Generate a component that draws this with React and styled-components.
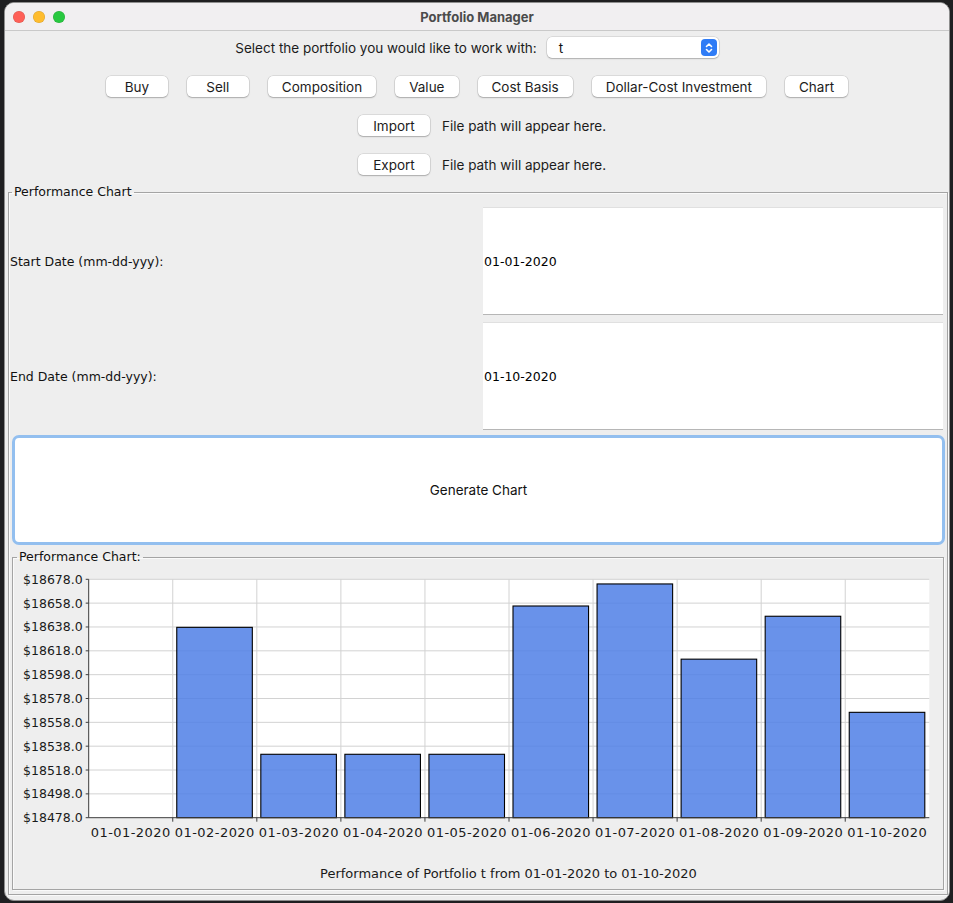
import React from "react";
import styled, { createGlobalStyle } from "styled-components";

const GlobalStyle = createGlobalStyle`
  html, body {
    margin: 0;
    padding: 0;
  }
  body {
    background: #1f1f21;
    padding: 2px 3px 0 4px;
    width: 953px;
    height: 903px;
    box-sizing: border-box;
    overflow: hidden;
  }
`;

const UI_FONT = `"Inter", "Roboto", "Noto Sans", sans-serif`;
const CHART_FONT = `"DejaVu Sans", "Noto Sans", sans-serif`;

const Window = styled.div`
  width: 946px;
  height: 899px;
  box-sizing: border-box;
  background: #eeeeee;
  border: 1px solid #8e8e8e;
  border-radius: 10px;
  overflow: hidden;
  display: flex;
  flex-direction: column;
`;

const TitleBar = styled.div`
  height: 27px;
  flex: none;
  background: #f1eff1;
  border-bottom: 1px solid #c9c9c9;
  display: grid;
  grid-template-columns: 1fr auto 1fr;
  align-items: center;
`;

const Lights = styled.div`
  display: flex;
  gap: 8px;
  padding-left: 8px;
`;

const Light = styled.span`
  width: 12px;
  height: 12px;
  border-radius: 50%;
  background: ${(p) => p.color};
  box-shadow: inset 0 0 0 0.5px rgba(0, 0, 0, 0.15);
`;

const Title = styled.div`
  font-family: ${UI_FONT};
  font-weight: 700;
  font-size: 13px;
  color: #4b4b4b;
`;

const Content = styled.div`
  flex: 1;
  display: flex;
  flex-direction: column;
  padding-top: 6px;
  min-height: 0;
`;

const Toolbar = styled.div`
  display: flex;
  flex-direction: column;
  gap: 18px;
`;

const Row = styled.div`
  height: 21px;
  display: flex;
  align-items: center;
  justify-content: center;
  gap: ${(p) => p.gap}px;
  padding-left: ${(p) => p.shift || 0}px;
`;

const Label = styled.span`
  font-family: ${UI_FONT};
  font-size: 13.5px;
  color: #1c1c1c;
`;

const Combo = styled.div`
  width: 172px;
  height: 21px;
  box-sizing: border-box;
  background: #fff;
  border-radius: 5px;
  box-shadow: 0 0 0 0.5px rgba(0, 0, 0, 0.16), 0 1px 1.5px rgba(0, 0, 0, 0.2);
  display: flex;
  align-items: center;
  justify-content: space-between;
  padding: 0 2px 0 12px;
  font-family: ${UI_FONT};
  font-size: 13.5px;
  color: #111;
`;

const Stepper = styled.span`
  width: 16px;
  height: 17px;
  border-radius: 4px;
  background: #2f7cf6;
  display: flex;
  align-items: center;
  justify-content: center;
`;

const PushButton = styled.button`
  height: 21px;
  min-width: ${(p) => p.minWidth || 62}px;
  padding: 0 14px;
  background: #fff;
  border: none;
  border-radius: 5px;
  box-shadow: 0 0 0 0.5px rgba(0, 0, 0, 0.16), 0 1px 1.5px rgba(0, 0, 0, 0.22);
  font-family: ${UI_FONT};
  font-size: 13.5px;
  color: #1c1c1c;
  cursor: pointer;
`;

const GroupBox = styled.fieldset`
  flex: 1;
  min-width: 0;
  min-height: 0;
  display: flex;
  flex-direction: column;
  margin: ${(p) => p.margin};
  padding: ${(p) => p.pad};
  border: 1px solid #a4a4a4;
  box-shadow: inset 1px 1px 0 #fafafa, 1px 1px 0 #fafafa;
`;

const GroupTitle = styled.legend`
  font-family: ${CHART_FONT};
  font-size: 12.5px;
  line-height: 16px;
  color: #111;
  padding: 0 2px;
  margin-left: ${(p) => p.indent}px;
`;

const DateRow = styled.div`
  height: 108px;
  flex: none;
  display: grid;
  grid-template-columns: 1fr 460px;
  margin-bottom: 7px;
`;

const DateLabel = styled.span`
  align-self: center;
  font-family: ${CHART_FONT};
  font-size: 12.5px;
  color: #111;
`;

const DateField = styled.div`
  box-sizing: border-box;
  background: #fff;
  border-top: 1px solid #e0e0e0;
  border-bottom: 1px solid #b6b6b6;
  display: flex;
  align-items: center;
  padding-left: 1px;
  font-family: ${CHART_FONT};
  font-size: 12.5px;
  color: #000;
`;

const GenerateButton = styled.button`
  height: 110px;
  flex: none;
  margin: -2px -2px 0 2px;
  background: #fff;
  border: 3px solid #93bfef;
  border-radius: 7px;
  font-family: ${UI_FONT};
  font-size: 13.5px;
  color: #111;
  cursor: pointer;
`;

const ChartSvg = styled.svg`
  display: block;
  flex: none;
`;

const data = [
  { date: "01-01-2020", value: 18478 },
  { date: "01-02-2020", value: 18637.7 },
  { date: "01-03-2020", value: 18531.2 },
  { date: "01-04-2020", value: 18531.2 },
  { date: "01-05-2020", value: 18531.2 },
  { date: "01-06-2020", value: 18655.6 },
  { date: "01-07-2020", value: 18674.1 },
  { date: "01-08-2020", value: 18611 },
  { date: "01-09-2020", value: 18647 },
  { date: "01-10-2020", value: 18566.4 },
];

const PLOT = { left: 75.7, right: 916.3, top: 14.3, bottom: 252.7 };
const MIN = 18478;
const MAX = 18678;

const yOf = (v) => PLOT.bottom - ((v - MIN) / (MAX - MIN)) * (PLOT.bottom - PLOT.top);

const PerformanceChart = () => {
  const cw = (PLOT.right - PLOT.left) / data.length;
  const ticks = Array.from({ length: 11 }, (_, i) => MIN + i * 20);

  return (
    <ChartSvg width="929" height="322" viewBox="0 0 929 322">
      <rect x={PLOT.left} y={PLOT.top} width={PLOT.right - PLOT.left} height={PLOT.bottom - PLOT.top} fill="#fff" />
      {ticks.slice(1).map((t) => (
        <line key={t} x1={PLOT.left} x2={PLOT.right} y1={yOf(t)} y2={yOf(t)} stroke="#d2d2d2" strokeWidth="1" />
      ))}
      {data.slice(1).map((_, i) => (
        <line
          key={i}
          x1={PLOT.left + cw * (i + 1)}
          x2={PLOT.left + cw * (i + 1)}
          y1={PLOT.top}
          y2={PLOT.bottom}
          stroke="#d2d2d2"
          strokeWidth="1"
        />
      ))}
      {data.map((d, i) =>
        d.value > MIN ? (
          <rect
            key={d.date}
            x={PLOT.left + cw * i + 4}
            y={yOf(d.value)}
            width={cw - 8.5}
            height={PLOT.bottom - yOf(d.value)}
            fill="#4f7fe6"
            fillOpacity="0.85"
            stroke="#000"
            strokeWidth="1.1"
          />
        ) : null
      )}
      <line x1={PLOT.left} x2={PLOT.left} y1={PLOT.top} y2={PLOT.bottom} stroke="#3c3c3c" strokeWidth="1" />
      <line x1={PLOT.left} x2={PLOT.right} y1={PLOT.bottom} y2={PLOT.bottom} stroke="#3c3c3c" strokeWidth="1" />
      {ticks.map((t) => (
        <g key={t}>
          <line x1={PLOT.left - 3} x2={PLOT.left} y1={yOf(t)} y2={yOf(t)} stroke="#3c3c3c" strokeWidth="1" />
          <text
            x={PLOT.left - 6}
            y={yOf(t) + 4.5}
            textAnchor="end"
            fontFamily={CHART_FONT}
            fontSize="12.5"
            fill="#1a1a1a"
          >
            ${t.toFixed(1)}
          </text>
        </g>
      ))}
      {data.map((d, i) => (
        <g key={d.date}>
          {i > 0 && (
            <line
              x1={PLOT.left + cw * i}
              x2={PLOT.left + cw * i}
              y1={PLOT.bottom}
              y2={PLOT.bottom + 4}
              stroke="#3c3c3c"
              strokeWidth="1"
            />
          )}
          <text
            x={PLOT.left + cw * (i + 0.5)}
            y="271.5"
            textAnchor="middle"
            fontFamily={CHART_FONT}
            fontSize="13"
            letterSpacing="0.45"
            fill="#1a1a1a"
          >
            {d.date}
          </text>
        </g>
      ))}
      <text x="495.5" y="312.5" textAnchor="middle" fontFamily={CHART_FONT} fontSize="13" fill="#1a1a1a">
        Performance of Portfolio t from 01-01-2020 to 01-10-2020
      </text>
    </ChartSvg>
  );
};

const actions = ["Buy", "Sell", "Composition", "Value", "Cost Basis", "Dollar-Cost Investment", "Chart"];

const App = () => (
  <>
    <GlobalStyle />
    <Window>
      <TitleBar>
        <Lights>
          <Light color="#fe5f57" />
          <Light color="#febc2e" />
          <Light color="#28c840" />
        </Lights>
        <Title>Portfolio Manager</Title>
        <span />
      </TitleBar>
      <Content>
        <Toolbar>
          <Row gap={10}>
            <Label>Select the portfolio you would like to work with:</Label>
            <Combo>
              t
              <Stepper>
                <svg width="8" height="12" viewBox="0 0 8 12" fill="none" stroke="#fff" strokeWidth="1.6" strokeLinecap="round" strokeLinejoin="round">
                  <path d="M1.5 4.5 L4 2 L6.5 4.5" />
                  <path d="M1.5 7.5 L4 10 L6.5 7.5" />
                </svg>
              </Stepper>
            </Combo>
          </Row>
          <Row gap={19}>
            {actions.map((a) => (
              <PushButton key={a}>{a}</PushButton>
            ))}
          </Row>
          <Row gap={12} shift={10}>
            <PushButton minWidth={72}>Import</PushButton>
            <Label>File path will appear here.</Label>
          </Row>
          <Row gap={12} shift={10}>
            <PushButton minWidth={72}>Export</PushButton>
            <Label>File path will appear here.</Label>
          </Row>
        </Toolbar>
        <GroupBox margin="9px 1px 5px 3px" pad="7px 4px 4px 1px">
          <GroupTitle indent={2}>Performance Chart</GroupTitle>
          <DateRow>
            <DateLabel>Start Date (mm-dd-yyy):</DateLabel>
            <DateField>01-01-2020</DateField>
          </DateRow>
          <DateRow>
            <DateLabel>End Date (mm-dd-yyy):</DateLabel>
            <DateField>01-10-2020</DateField>
          </DateRow>
          <GenerateButton>Generate Chart</GenerateButton>
          <GroupBox margin="4px -1px 0 2px" pad="0">
            <GroupTitle indent={4}>Performance Chart:</GroupTitle>
            <PerformanceChart />
          </GroupBox>
        </GroupBox>
      </Content>
    </Window>
  </>
);

export default App;
